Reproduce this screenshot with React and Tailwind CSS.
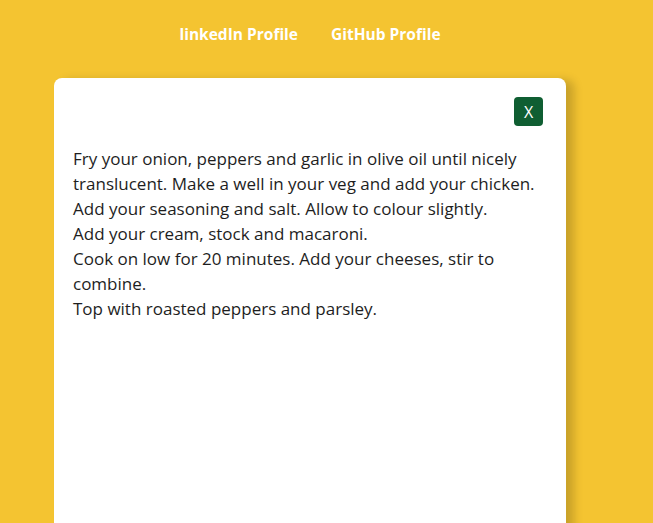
import React from "react";

const lines = [
  "Fry your onion, peppers and garlic in olive oil until nicely",
  "translucent. Make a well in your veg and add your chicken.",
  "Add your seasoning and salt. Allow to colour slightly.",
  "Add your cream, stock and macaroni.",
  "Cook on low for 20 minutes. Add your cheeses, stir to",
  "combine.",
  "Top with roasted peppers and parsley.",
];

const App = () => {
  return (
    <div
      className="h-screen bg-[#f4c431] overflow-hidden"
      style={{ fontFamily: '"Open Sans", "Noto Sans", sans-serif' }}
    >
      <div className="ml-[54px] w-[512px]">
        <nav className="flex justify-center gap-[33px] pt-[23px] h-[78px]">
          <a className="text-[15.5px] font-bold text-white leading-[22px]">linkedIn Profile</a>
          <a className="text-[15.5px] font-bold text-white leading-[22px]">GitHub Profile</a>
        </nav>

        <div className="bg-white rounded-lg h-[480px] pl-[19px] pr-[23px] pt-[19px] shadow-[8px_2px_10px_rgba(0,0,0,0.18)]">
          <div className="flex justify-end">
            <button className="w-[29px] h-[29px] rounded bg-[#0f5e32] text-white text-[16px] leading-none">
              X
            </button>
          </div>
          <div className="mt-[20px] text-[17px] leading-[25px] text-[#1e1e1e]">
            {lines.map((line) => (
              <p key={line} className="whitespace-nowrap">
                {line}
              </p>
            ))}
          </div>
        </div>
      </div>
    </div>
  );
};

export default App;
